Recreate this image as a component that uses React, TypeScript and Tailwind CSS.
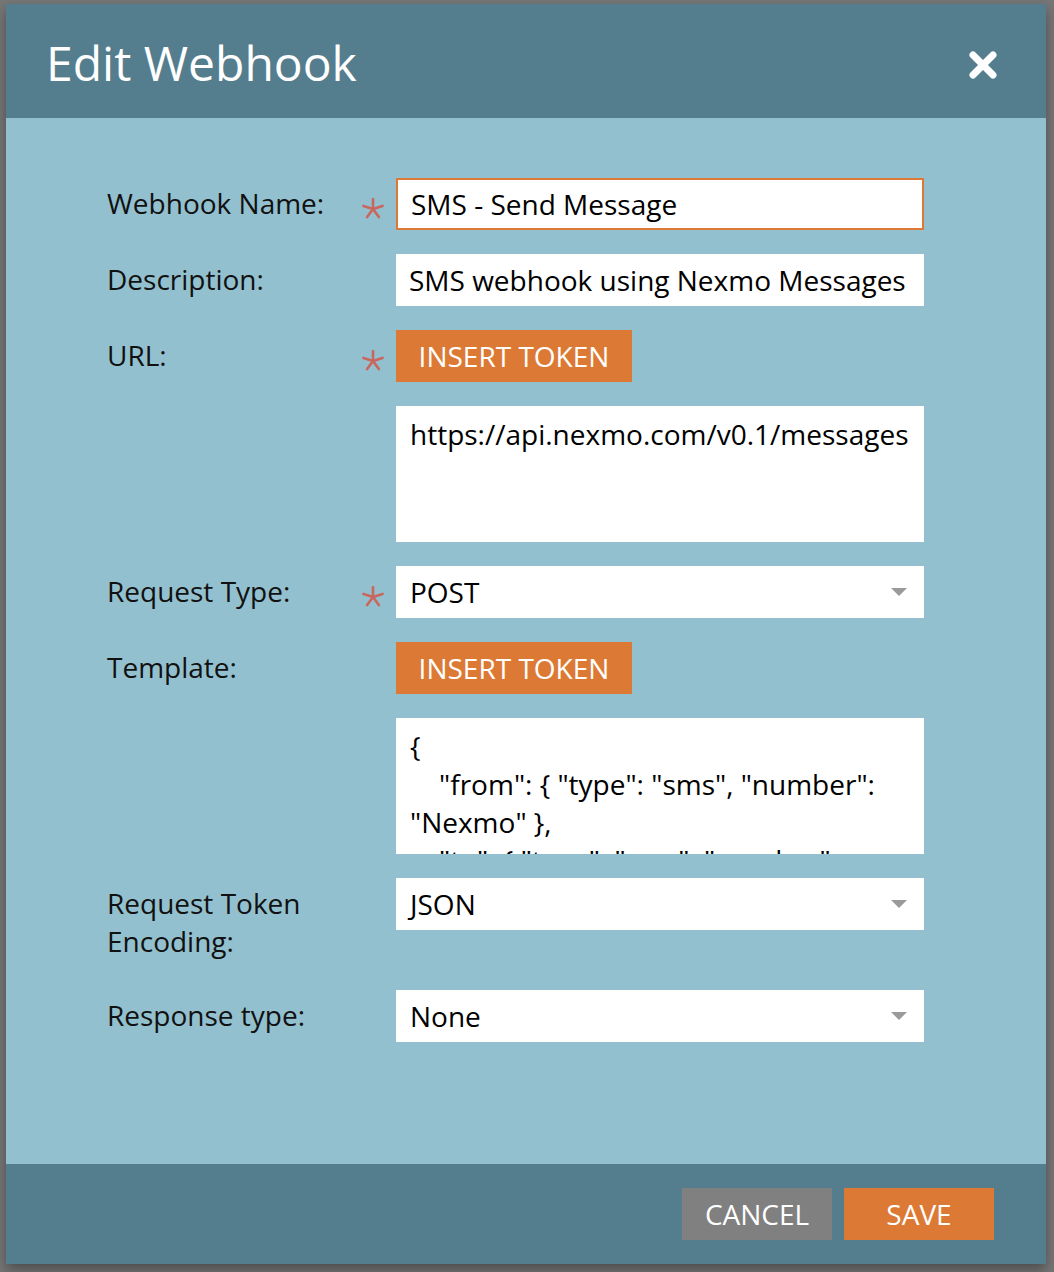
import React from 'react';

const font = { fontFamily: '"Open Sans", "Noto Sans", sans-serif' };

const Asterisk = () => (
  <svg width="22" height="22" viewBox="-11 -11 22 22" className="mt-[20px] ml-[2px]">
    {[-90, -18, 54, 126, 198].map((a) => (
      <line
        key={a}
        x1="0"
        y1="0"
        x2={Math.cos((a * Math.PI) / 180) * 10}
        y2={Math.sin((a * Math.PI) / 180) * 10}
        stroke="#c8675d"
        strokeWidth="2.6"
        strokeLinecap="round"
      />
    ))}
  </svg>
);

const Caret = () => (
  <svg width="18" height="10" viewBox="0 0 18 10" className="shrink-0">
    <path d="M1 1 L17 1 L9 9 Z" fill="#9a9a9a" />
  </svg>
);

const Row = ({ label, required, children, className = '' }: any) => (
  <div className={`flex items-start ${className}`}>
    <div className="w-[253px] pt-[6px] pr-4 text-[28px] leading-[38px] text-[#111]">{label}</div>
    <div className="w-[36px] h-[52px]">{required && <Asterisk />}</div>
    <div className="w-[528px]">{children}</div>
  </div>
);

const TextBox = ({ value, focused }: any) => (
  <div
    className={`h-[52px] bg-white flex items-center px-[13px] text-[28px] text-black whitespace-nowrap overflow-hidden ${
      focused ? 'border-2 border-[#dc7a35]' : ''
    }`}
  >
    {value}
  </div>
);

const Select = ({ value }: any) => (
  <div className="h-[52px] bg-white flex items-center justify-between pl-[14px] pr-[16px] text-[28px] text-black">
    <span>{value}</span>
    <Caret />
  </div>
);

const TokenButton = () => (
  <button className="h-[52px] w-[236px] bg-[#dc7a35] text-white text-[28px]">INSERT TOKEN</button>
);

const TextArea = ({ lines }: { lines: string[] }) => (
  <div className="h-[136px] bg-white overflow-hidden px-[14px] pt-[9px] text-[28px] leading-[38px] text-black">
    {lines.map((l, i) => (
      <div key={i} className="whitespace-pre">{l}</div>
    ))}
  </div>
);

export default function App() {
  return (
    <div className="w-[1054px] h-[1272px] bg-[#767676] pt-[4px] pl-[6px] overflow-hidden" style={font}>
      <div className="w-[1040px] h-[1260px] flex flex-col shadow-[0_6px_12px_rgba(0,0,0,0.35)]">
        <div className="h-[114px] bg-[#547d8e] flex items-center justify-between pl-[40px] pr-[48px] pt-[8px]">
          <h1 className="text-[48px] text-white leading-none pb-[4px]">Edit Webhook</h1>
          <svg width="30" height="30" viewBox="0 0 30 30">
            <path d="M5 5 L25 25 M25 5 L5 25" stroke="white" strokeWidth="7" strokeLinecap="round" />
          </svg>
        </div>

        <div className="flex-1 bg-[#93c0cf] pt-[60px] pl-[101px] flex flex-col gap-[24px]">
          <Row label="Webhook Name:" required>
            <TextBox value="SMS - Send Message" focused />
          </Row>
          <Row label="Description:">
            <TextBox value="SMS webhook using Nexmo Messages" />
          </Row>
          <Row label="URL:" required>
            <div className="flex flex-col gap-[24px]">
              <TokenButton />
              <TextArea lines={['https://api.nexmo.com/v0.1/messages']} />
            </div>
          </Row>
          <Row label="Request Type:" required>
            <Select value="POST" />
          </Row>
          <Row label="Template:">
            <div className="flex flex-col gap-[24px]">
              <TokenButton />
              <TextArea
                lines={[
                  '{',
                  '    "from": { "type": "sms", "number":',
                  '"Nexmo" },',
                  '    "to": { "type": "sms", "number":',
                ]}
              />
            </div>
          </Row>
          <Row label="Request Token Encoding:">
            <Select value="JSON" />
          </Row>
          <Row label="Response type:" className="mt-[6px]">
            <Select value="None" />
          </Row>
        </div>

        <div className="h-[100px] bg-[#547d8e] flex items-center justify-end gap-[12px] pr-[52px]">
          <button className="h-[52px] w-[150px] bg-[#808080] text-white text-[28px]">CANCEL</button>
          <button className="h-[52px] w-[150px] bg-[#dc7a35] text-white text-[28px]">SAVE</button>
        </div>
      </div>
    </div>
  );
}
